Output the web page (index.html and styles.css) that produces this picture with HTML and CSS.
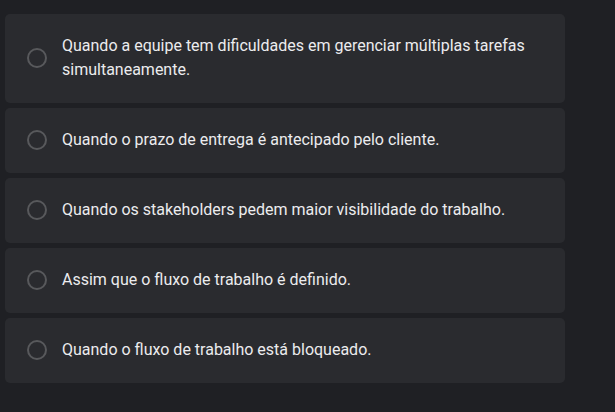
FILE: index.html
```html
<!DOCTYPE html>
<html lang="pt-BR">

<head>
    <meta charset="UTF-8">
    <meta name="viewport" content="width=device-width, initial-scale=1.0">
    <title>Questão</title>
    <link rel="stylesheet" href="styles.css">
</head>

<body>
    <ul class="options">
        <li class="option">
            <span class="radio"></span>
            <p class="label">Quando a equipe tem dificuldades em gerenciar múltiplas tarefas simultaneamente.</p>
        </li>
        <li class="option">
            <span class="radio"></span>
            <p class="label">Quando o prazo de entrega é antecipado pelo cliente.</p>
        </li>
        <li class="option">
            <span class="radio"></span>
            <p class="label">Quando os stakeholders pedem maior visibilidade do trabalho.</p>
        </li>
        <li class="option">
            <span class="radio"></span>
            <p class="label">Assim que o fluxo de trabalho é definido.</p>
        </li>
        <li class="option">
            <span class="radio"></span>
            <p class="label">Quando o fluxo de trabalho está bloqueado.</p>
        </li>
    </ul>
</body>

</html>
```

FILE: styles.css
```css
* {
    margin: 0;
    padding: 0;
    box-sizing: border-box;
    list-style: none;
}

html,
body {
    width: 100%;
    height: 100%;
}

body {
    background: #1f2024;
    font-family: Roboto, "Liberation Sans", sans-serif;
    color: #ececee;
}

.options {
    width: 560px;
    margin-left: 5px;
    padding-top: 14px;
    display: flex;
    flex-direction: column;
    gap: 5px;
}

.option {
    display: flex;
    align-items: center;
    padding: 20px 30px 21px 22px;
    background: #2a2b2f;
    border-radius: 5px;
}

.radio {
    width: 20px;
    height: 20px;
    flex-shrink: 0;
    border: 2px solid #58595c;
    border-radius: 50%;
    margin-right: 15px;
}

.label {
    font-size: 16px;
    line-height: 24px;
}
```
